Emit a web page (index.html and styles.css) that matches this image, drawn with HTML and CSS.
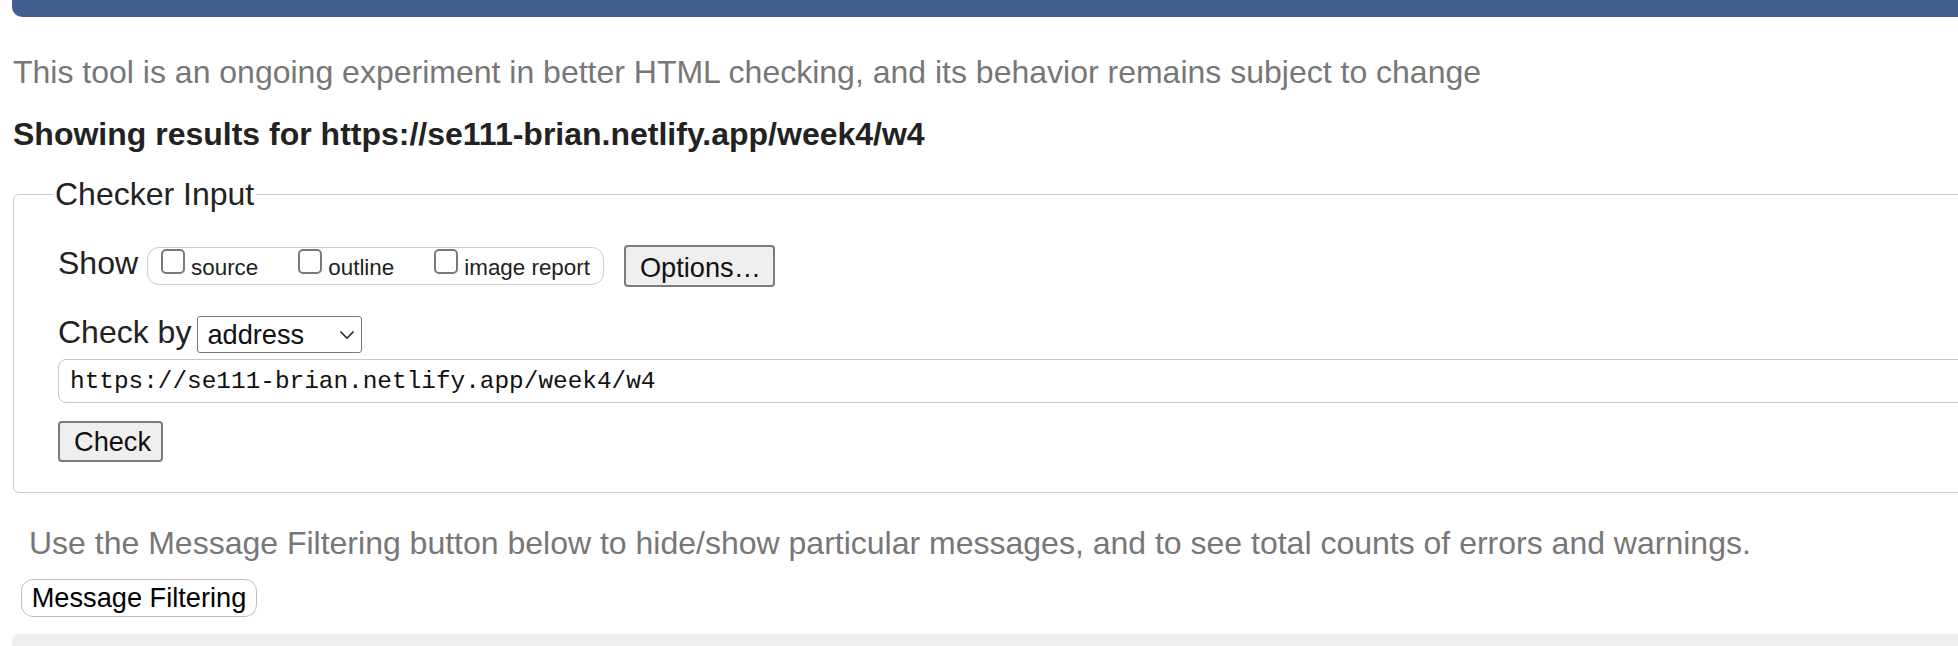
FILE: index.html
```html
<!DOCTYPE html>
<html lang="en">
<head>
<meta charset="utf-8">
<title>Nu Html Checker</title>
<link rel="stylesheet" href="styles.css">
</head>
<body>
<div class="page">
  <header class="topbar"></header>
  <p class="intro">This tool is an ongoing experiment in better HTML checking, and its behavior remains subject to change</p>
  <h2 class="results">Showing results for https://se111-brian.netlify.app/week4/w4</h2>
  <form class="checker-form">
    <fieldset class="checker">
      <legend class="legend">Checker Input</legend>
      <div class="row show-row">
        <span class="label show-label">Show</span>
        <div class="opts">
          <label class="opt"><input type="checkbox" class="cb"><span class="opt-text">source</span></label>
          <label class="opt"><input type="checkbox" class="cb"><span class="opt-text">outline</span></label>
          <label class="opt opt-last"><input type="checkbox" class="cb"><span class="opt-text">image report</span></label>
        </div>
        <button type="button" class="btn options">Options…</button>
      </div>
      <div class="row by-row">
        <span class="label by-label">Check by</span>
        <span class="select-wrap">
          <select class="select"><option>address</option></select>
          <svg class="chev" width="16" height="10" viewBox="0 0 16 10"><path d="M1.5 1.5 L8 8.2 L14.5 1.5" fill="none" stroke="#1a1a1a" stroke-width="1.5"/></svg>
        </span>
      </div>
      <input class="url" type="text" value="https://se111-brian.netlify.app/week4/w4">
      <div class="check-row"><button type="button" class="btn check">Check</button></div>
    </fieldset>
  </form>
  <div class="filter">
    <p class="filter-note">Use the Message Filtering button below to hide/show particular messages, and to see total counts of errors and warnings.</p>
    <button type="button" class="mf">Message Filtering</button>
  </div>
  <div class="band"></div>
</div>
</body>
</html>
```
FILE: styles.css
```css
html, body {
  margin: 0;
  padding: 0;
  background: #fff;
  overflow: hidden;
}
body {
  font-family: "Liberation Sans", Arial, sans-serif;
  color: #222;
}
.page {
  width: 2300px;
  padding-left: 12px;
}
.topbar {
  height: 17px;
  background: #445e91;
  border-bottom-left-radius: 10px;
}
.intro {
  margin: 35px 0 0 1px;
  font-size: 32px;
  line-height: 40px;
  color: #777;
}
.results {
  margin: 24px 0 0 1px;
  font-size: 32px;
  line-height: 36px;
  font-weight: 700;
  color: #222;
}
.checker-form {
  margin: 24px 0 0 1px;
}
.checker {
  margin: 0;
  width: 2200px;
  box-sizing: border-box;
  border: 1px solid #cccccc;
  border-radius: 6px;
  padding: 33px 0 30px 44px;
}
.legend {
  margin-left: -5px;
  padding: 0 2px;
  font-size: 32px;
  line-height: 36px;
  color: #222;
}
.row {
  display: flex;
  align-items: flex-start;
}
.label {
  font-size: 32px;
  line-height: 36px;
  color: #222;
}
.show-label {
  margin-right: 9px;
}
.opts {
  margin-top: 2px;
  height: 38px;
  box-sizing: border-box;
  border: 1px solid #cccccc;
  border-radius: 12px;
  padding: 0 13px;
  display: flex;
  align-items: flex-start;
}
.opt {
  display: flex;
  align-items: flex-start;
  margin-right: 40px;
}
.opt-last {
  margin-right: 0;
}
.cb {
  appearance: none;
  -webkit-appearance: none;
  width: 24px;
  height: 25px;
  margin: 1px 6px 0 0;
  box-sizing: border-box;
  border: 2px solid #7a7a7a;
  border-radius: 5px;
  background: #fff;
}
.opt-text {
  font-size: 22.4px;
  line-height: 25px;
  margin-top: 7px;
  color: #222;
}
.btn {
  font-family: "Liberation Sans", Arial, sans-serif;
  font-size: 27.2px;
  color: #111;
  background: #efefef;
  border: 2px solid #7b7b7b;
  border-radius: 4px;
  box-sizing: border-box;
  padding: 0 14px;
}
.options {
  margin-left: 20px;
  height: 42px;
  width: 151px;
  padding-top: 3px;
}
.by-row {
  margin-top: 27px;
}
.by-label {
  margin-right: 6px;
}
.select-wrap {
  position: relative;
  margin-top: 2px;
  display: block;
}
.select {
  appearance: none;
  -webkit-appearance: none;
  display: block;
  width: 165px;
  height: 37px;
  box-sizing: border-box;
  border: 1px solid #767676;
  border-radius: 3px;
  background: #fff;
  padding: 0 0 0 9px;
  font-family: "Liberation Sans", Arial, sans-serif;
  font-size: 27.2px;
  color: #111;
}
.chev {
  position: absolute;
  right: 7px;
  top: 14px;
}
.url {
  display: block;
  margin-top: 6px;
  width: 2200px;
  height: 44px;
  box-sizing: border-box;
  border: 1px solid #c8c8c8;
  border-radius: 8px;
  padding: 0 0 0 11px;
  font-family: "Liberation Mono", "DejaVu Sans Mono", monospace;
  font-size: 24.4px;
  color: #111;
  background: #fff;
}
.check-row {
  margin-top: 18px;
}
.check {
  height: 41px;
  width: 105px;
}
.filter {
  padding-left: 9px;
  margin-top: 30px;
}
.filter-note {
  margin: 0 0 0 8px;
  font-size: 32px;
  line-height: 40px;
  color: #777;
}
.mf {
  margin-top: 16px;
  display: block;
  height: 38px;
  width: 236px;
  box-sizing: border-box;
  background: #fff;
  border: 1px solid #bdbdbd;
  border-radius: 12px;
  font-family: "Liberation Sans", Arial, sans-serif;
  font-size: 27.2px;
  color: #000;
  padding: 0;
}
.band {
  margin-top: 17px;
  height: 60px;
  background: #eeeeee;
  border-top-left-radius: 8px;
}
```
